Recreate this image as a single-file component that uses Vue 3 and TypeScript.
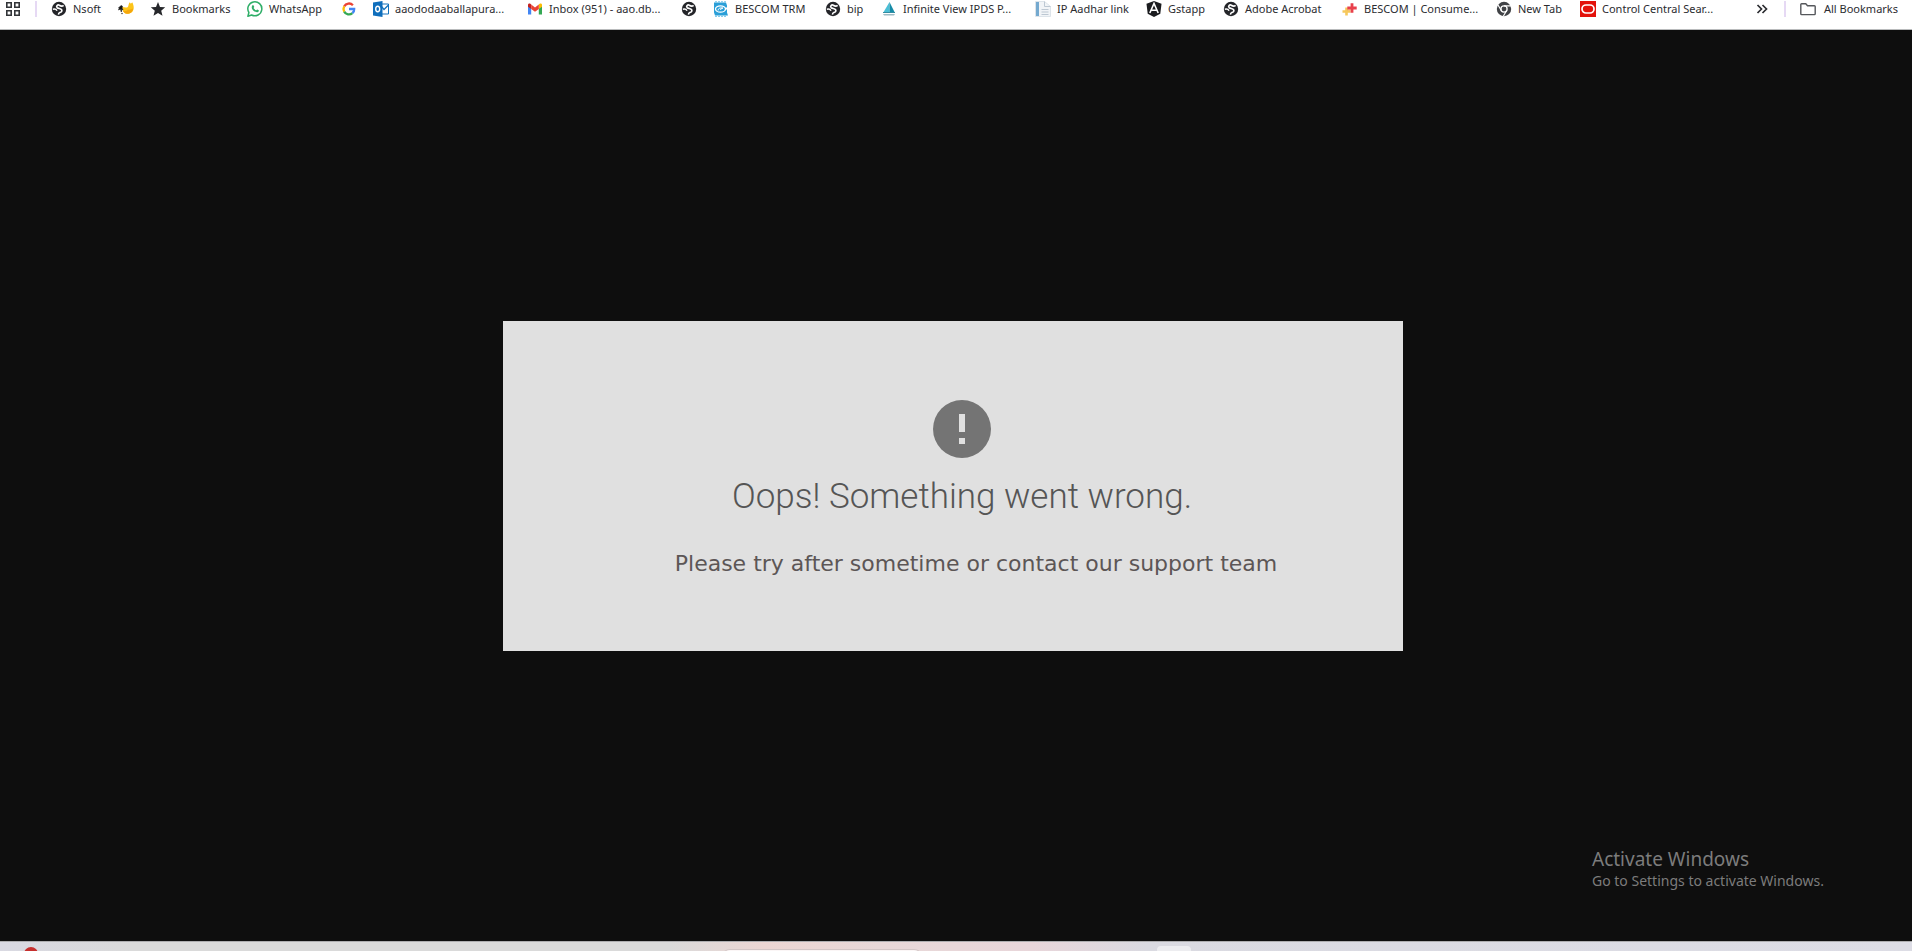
<script setup lang="ts">
interface Bookmark {
  icon: string
  label: string
  title: string
  width: number
}

const bookmarks: Bookmark[] = [
  { icon: 'globe', label: 'Nsoft', title: 'Nsoft', width: 67 },
  { icon: 'bird', label: '', title: 'Bird', width: 32 },
  { icon: 'star', label: 'Bookmarks', title: 'Bookmarks', width: 97 },
  { icon: 'whatsapp', label: 'WhatsApp', title: 'WhatsApp', width: 94 },
  { icon: 'google', label: '', title: 'Google', width: 32 },
  { icon: 'outlook', label: 'aaododaaballapura...', title: 'Outlook', width: 154 },
  { icon: 'gmail', label: 'Inbox (951) - aao.db...', title: 'Gmail', width: 154 },
  { icon: 'globe', label: '', title: 'Website', width: 32 },
  { icon: 'trm', label: 'BESCOM TRM', title: 'BESCOM TRM', width: 112 },
  { icon: 'globe', label: 'bip', title: 'bip', width: 56 },
  { icon: 'sail', label: 'Infinite View IPDS P...', title: 'Infinite View IPDS', width: 154 },
  { icon: 'doc', label: 'IP Aadhar link', title: 'IP Aadhar link', width: 111 },
  { icon: 'angular', label: 'Gstapp', title: 'Gstapp', width: 77 },
  { icon: 'globe', label: 'Adobe Acrobat', title: 'Adobe Acrobat', width: 119 },
  { icon: 'plus', label: 'BESCOM | Consume...', title: 'BESCOM Consumer', width: 154 },
  { icon: 'chrome', label: 'New Tab', title: 'New Tab', width: 84 },
  { icon: 'oracle', label: 'Control Central Sear...', title: 'Control Central Search', width: 154 },
]
</script>

<template>
  <div class="screen">
    <nav class="bar" aria-label="Bookmarks bar">
      <button class="apps" type="button" aria-label="Apps">
        <svg viewBox="0 0 16 16" fill="none" stroke="#333539" stroke-width="1.600">
          <path d="M1.800 1.800h4.400v4.400H1.800zM9.800 1.800h4.400v4.400H9.800zM1.800 9.800h4.400v4.400H1.800zM9.800 9.800h4.400v4.400H9.800z" />
        </svg>
      </button>
      <span class="divider"></span>
      <div class="items">
        <a
          v-for="(b, i) in bookmarks"
          :key="i"
          class="item"
          href="#"
          :aria-label="b.title"
          :style="{ flexBasis: b.width + 'px' }"
        >
          <svg v-if="b.icon === 'globe'" viewBox="0 0 16 16">
            <circle cx="8" cy="8" r="7.200" fill="#242529" />
            <path d="M12.600 4.300C11 5.700 9.500 5 8.300 4.200 6.600 3.400 4.800 5 6.200 6.600c1.200 1.200 3.600.6 4.500 2.200.7 1.500-.8 2.700-2.200 2.900-.8.200-1 .9-.9 1.900" fill="none" stroke="#fff" stroke-width="1.700" />
            <path d="M1.800 8.200c1.600-.4 3.600.2 4.200 1.600" fill="none" stroke="#fff" stroke-width="1.500" />
          </svg>
          <svg v-else-if="b.icon === 'bird'" viewBox="0 0 16 16">
            <path d="M4 6c2 .2 4 1 5.500.2C11 5.300 10 2.500 12 1.200c.2 1 .5 1.300 1 1.300.6-.5 1-1 1.500-1 .8 2 1.800 5 .8 7.500-1 2.700-3.500 4-6.300 3.800C6 12.500 4.500 10 4 6z" fill="#fcc419" />
            <path d="M10 8.500c1.500.5 3.500 0 5-1-.2 3.500-3 5.400-6 5.300-2-.2-3.500-1.500-4.200-3 2 .8 4 .5 5.200-1.300z" fill="#f5a60b" />
            <path d="M.5 7 3 4.500l1.500.8L4 7l1 2-1.300-.8-.4 2.800-.9-3-1.900 1 .8-1.700z" fill="#171717" stroke="#171717" stroke-width=".6" />
            <circle cx="4" cy="12.500" r=".7" fill="#222" />
          </svg>
          <svg v-else-if="b.icon === 'star'" viewBox="0 0 16 16">
            <path d="m8 1 2 4.900 5.200.4-4 3.400 1.300 5.100L8 12l-4.500 2.800 1.300-5.100-4-3.400L6 5.900z" fill="#26272b" />
          </svg>
          <svg v-else-if="b.icon === 'whatsapp'" viewBox="0 0 16 16">
            <path d="m.9 15.200 1-3.700A7 7 0 1 1 4.600 14z" fill="#fff" stroke="#2fae68" stroke-width="1.500" stroke-linejoin="round" />
            <path d="M5.500 4.200c.5-.4.900-.2 1.100.3l.6 1.300c.1.400-.6.900-.6 1.200.5 1 1.300 1.800 2.400 2.300.4.100.8-.9 1.200-.8l1.500.8c.5.400-.1 1.400-.7 1.700-1.400.6-3.500-.3-4.800-1.600C4.900 8.100 4 5.900 5.500 4.200z" fill="#2fae68" />
          </svg>
          <svg v-else-if="b.icon === 'google'" viewBox="0 0 16 16" fill="none" stroke-width="2.300">
            <path d="M3.200 5.400A5.400 5.400 0 0 1 11.900 4.200" stroke="#ea4335" />
            <path d="M3.200 5.400a5.400 5.400 0 0 0 0 5.200" stroke="#fbbc05" />
            <path d="M3.200 10.600a5.400 5.400 0 0 0 8.200 1.600" stroke="#34a853" />
            <path d="M11.400 12.200A5.200 5.200 0 0 0 13.200 8H8" stroke="#4285f4" />
          </svg>
          <svg v-else-if="b.icon === 'outlook'" viewBox="0 0 16 16">
            <path d="M8 3h7.500v10H8z" fill="#fff" stroke="#1473bd" />
            <path d="m8.500 5.500 2.500 3 4.500-4.500" fill="none" stroke="#1473bd" stroke-width="1.300" />
            <path d="m0 1.500 9.500-1.500v16L0 14.500z" fill="#0f6ebc" />
            <ellipse cx="4.700" cy="8" rx="2" ry="2.800" fill="none" stroke="#fff" stroke-width="1.400" />
          </svg>
          <svg v-else-if="b.icon === 'gmail'" viewBox="0 0 16 16">
            <path d="M1 4v9.500h3.200V7z" fill="#4285f4" />
            <path d="M15 4v9.500h-3.200V7z" fill="#34a853" />
            <path d="M11.800 3.500 13 2.600c.9-.5 2 .1 2 1.200v2L11.800 8z" fill="#fbbc04" />
            <path d="M4.200 3.500 3 2.600C2.100 2.100 1 2.700 1 3.800v2L4.200 8z" fill="#c5221f" />
            <path d="M4.200 3.500 8 6.400l3.800-2.900V8L8 10.800 4.200 8z" fill="#ea4335" />
          </svg>
          <svg v-else-if="b.icon === 'trm'" viewBox="0 0 16 16">
            <path d="M1 1.500h12l1 3v7l1 3H2l-1-3z" fill="#2a9fd8" />
            <path d="M2 .8h11M2 15.300h12" stroke="#6bc1e8" stroke-dasharray="2 1" />
            <ellipse cx="7.500" cy="8" rx="5" ry="3.200" fill="none" stroke="#fff" stroke-width="1.300" />
            <path d="M5 9.500c0-2 2-3 5-2.500L7 8.500" fill="none" stroke="#fff" />
            <path d="M12.500 6.500H16v2h-3.500z" fill="#fff" />
          </svg>
          <svg v-else-if="b.icon === 'sail'" viewBox="0 0 16 16">
            <path d="M8.500 1v10H2.600z" fill="#4abfd6" />
            <path d="m8.500 1 5 10h-5z" fill="#168ba7" />
            <path d="M2 13h12l-1 1.500H3z" fill="#9ebcc5" />
            <path d="M2 11.500h12" stroke="#338da2" />
          </svg>
          <svg v-else-if="b.icon === 'doc'" viewBox="0 0 16 16">
            <path d="M.5.500h9l6 5v10H.5z" fill="#f1f4f7" stroke="#dde4ea" />
            <path d="M1 1h3v14H1z" fill="#74a9cf" />
            <path d="M9.500.5v5h6M6.500 8.500h7M6.500 11h7M6.500 13.500h7" fill="none" stroke="#bcc7d2" />
          </svg>
          <svg v-else-if="b.icon === 'angular'" viewBox="0 0 16 16">
            <path d="m8 0 7.500 2.700-1.200 10L8 16l-6.300-3.300-1.200-10z" fill="#1b1c1f" />
            <path d="m3.800 12 4.200-9.500 4.200 9.500M5.700 9.300h4.600" fill="none" stroke="#fff" stroke-width="1.600" />
          </svg>
          <svg v-else-if="b.icon === 'plus'" viewBox="0 0 16 16">
            <path d="M4.500 6.500v8M.5 10.500h8" stroke="#f6c85b" stroke-width="2.600" />
            <path d="M10 2.300v9.400M5.300 7h9.400" stroke="#e8404c" stroke-width="2.800" />
            <path d="M5.300 8.800h3" stroke="#ef8b50" stroke-width="1" />
          </svg>
          <svg v-else-if="b.icon === 'chrome'" viewBox="0 0 16 16">
            <circle cx="8" cy="8" r="7.200" fill="#404246" />
            <circle cx="8" cy="8" r="3.100" fill="#404246" stroke="#fff" stroke-width="1.300" />
            <path d="M8 4.900h7M5.300 9.500 2 4M10.700 9.500 7.300 15.300" stroke="#fff" stroke-width="1.200" />
          </svg>
          <svg v-else viewBox="0 0 16 16">
            <path d="M0 0h16v16H0z" fill="#e3120b" />
            <rect x="2" y="4" width="12" height="8" rx="4" fill="none" stroke="#fff" stroke-width="1.700" />
          </svg>
          <span v-if="b.label">{{ b.label }}</span>
        </a>
      </div>
      <button class="more" type="button" aria-label="More bookmarks">
        <svg viewBox="0 0 16 16" fill="none" stroke="#2b2c30" stroke-width="1.700">
          <path d="m3.500 4 4 4-4 4M8.500 4l4 4-4 4" />
        </svg>
      </button>
      <span class="divider"></span>
      <button class="all" type="button">
        <svg viewBox="0 0 16 16" fill="none" stroke="#55575b" stroke-width="1.400" stroke-linejoin="round">
          <path d="M.8 12.800V3.500c0-.5.300-.8.800-.8h4.200l1.700 2h6.900c.5 0 .8.300.8.800v7.300c0 .5-.3.800-.8.800H1.600c-.5 0-.8-.3-.8-.8z" />
        </svg>
        <span>All Bookmarks</span>
      </button>
    </nav>

    <main class="page">
      <section class="card">
        <svg class="alert" viewBox="0 0 58 58" role="img" aria-label="Error">
          <circle cx="29" cy="29" r="29" fill="#747474" />
          <path d="M26 14h6v18h-6zM26 38h6v6h-6z" fill="#e0e0e0" />
        </svg>
        <h1>Oops! Something went wrong.</h1>
        <p>Please try after sometime or contact our support team</p>
      </section>
      <aside class="watermark">
        <div class="wm-title">Activate Windows</div>
        <div class="wm-text">Go to Settings to activate Windows.</div>
      </aside>
    </main>

    <footer class="taskbar">
      <span class="badge"></span>
      <span class="search"></span>
      <span class="chip"></span>
    </footer>
  </div>
</template>

<style>
body {
  margin: 0;
  background: #0e0e0e;
}
</style>

<style scoped>
.screen {
  display: flex;
  flex-direction: column;
  height: 100vh;
  overflow: hidden;
  font-family: "Noto Sans", "Open Sans", sans-serif;
}
.bar {
  display: flex;
  align-items: center;
  flex: none;
  box-sizing: border-box;
  height: 30px;
  padding: 0 14px 12px 5px;
  background: #fff;
  border-bottom: 1px solid #b9bbbc;
  color: #2b2c30;
  font-size: 11px;
  line-height: 16px;
}
.bar svg {
  flex: none;
  width: 16px;
  height: 16px;
}
.bar button {
  display: flex;
  align-items: center;
  flex: none;
  margin: 0;
  padding: 0;
  border: 0;
  background: none;
  color: inherit;
  font: inherit;
}
.divider {
  flex: none;
  width: 2px;
  height: 16px;
  margin: 0 14px;
  background: #e6d9f4;
}
.items {
  display: flex;
  flex: 1;
  min-width: 0;
  overflow: hidden;
}
.item {
  display: flex;
  align-items: center;
  flex: none;
  gap: 6px;
  color: inherit;
  text-decoration: none;
  white-space: nowrap;
}
.more {
  margin-right: 2px;
}
.bar .all {
  gap: 8px;
  white-space: nowrap;
}
.page {
  position: relative;
  display: flex;
  align-items: center;
  justify-content: center;
  flex: 1;
  padding-right: 6px;
  background: #0e0e0e;
}
.card {
  display: flex;
  flex-direction: column;
  align-items: center;
  box-sizing: border-box;
  width: 900px;
  max-width: 100%;
  padding: 79px 0 73px 18px;
  background: #e0e0e0;
}
.alert {
  width: 58px;
  height: 58px;
}
h1 {
  margin: 17px 0 0;
  color: #555;
  font: 300 35px/44px Roboto, sans-serif;
}
p {
  margin: 31px 0 0;
  padding-left: 28px;
  color: #5c5656;
  font: 22px/28px "DejaVu Sans", Verdana, sans-serif;
}
.watermark {
  position: absolute;
  right: 84px;
  bottom: 50px;
  width: 236px;
  color: #7c7c7c;
  white-space: nowrap;
}
.wm-title {
  font-size: 19px;
  line-height: 24px;
}
.wm-text {
  font-size: 14px;
  line-height: 20px;
}
.taskbar {
  display: grid;
  grid-template-columns: 24fr 14fr 684fr 200fr 235fr 34fr 721fr;
  align-items: start;
  flex: none;
  box-sizing: border-box;
  height: 10px;
  overflow: hidden;
  border-top: 1px solid #aeaeb0;
  background: linear-gradient(90deg, #d9d9e2 0%, #dadada 7%, #dadada 35%, #ecd6d3 40%, #e8d8d8 46%, #e8d6da 54%, #dadae1 60%, #dddde5 100%);
}
.badge {
  grid-column: 2;
  height: 14px;
  margin-top: 5px;
  border-radius: 50%;
  background: #c62f2d;
}
.search {
  grid-column: 4;
  height: 20px;
  margin-top: 8px;
  border-radius: 8px;
  background: #fbf6f6;
  box-shadow: 0 0 0 1px #d3c6c6;
}
.chip {
  grid-column: 6;
  height: 20px;
  margin-top: 4px;
  border-radius: 4px;
  background: #ededf0;
}
</style>
